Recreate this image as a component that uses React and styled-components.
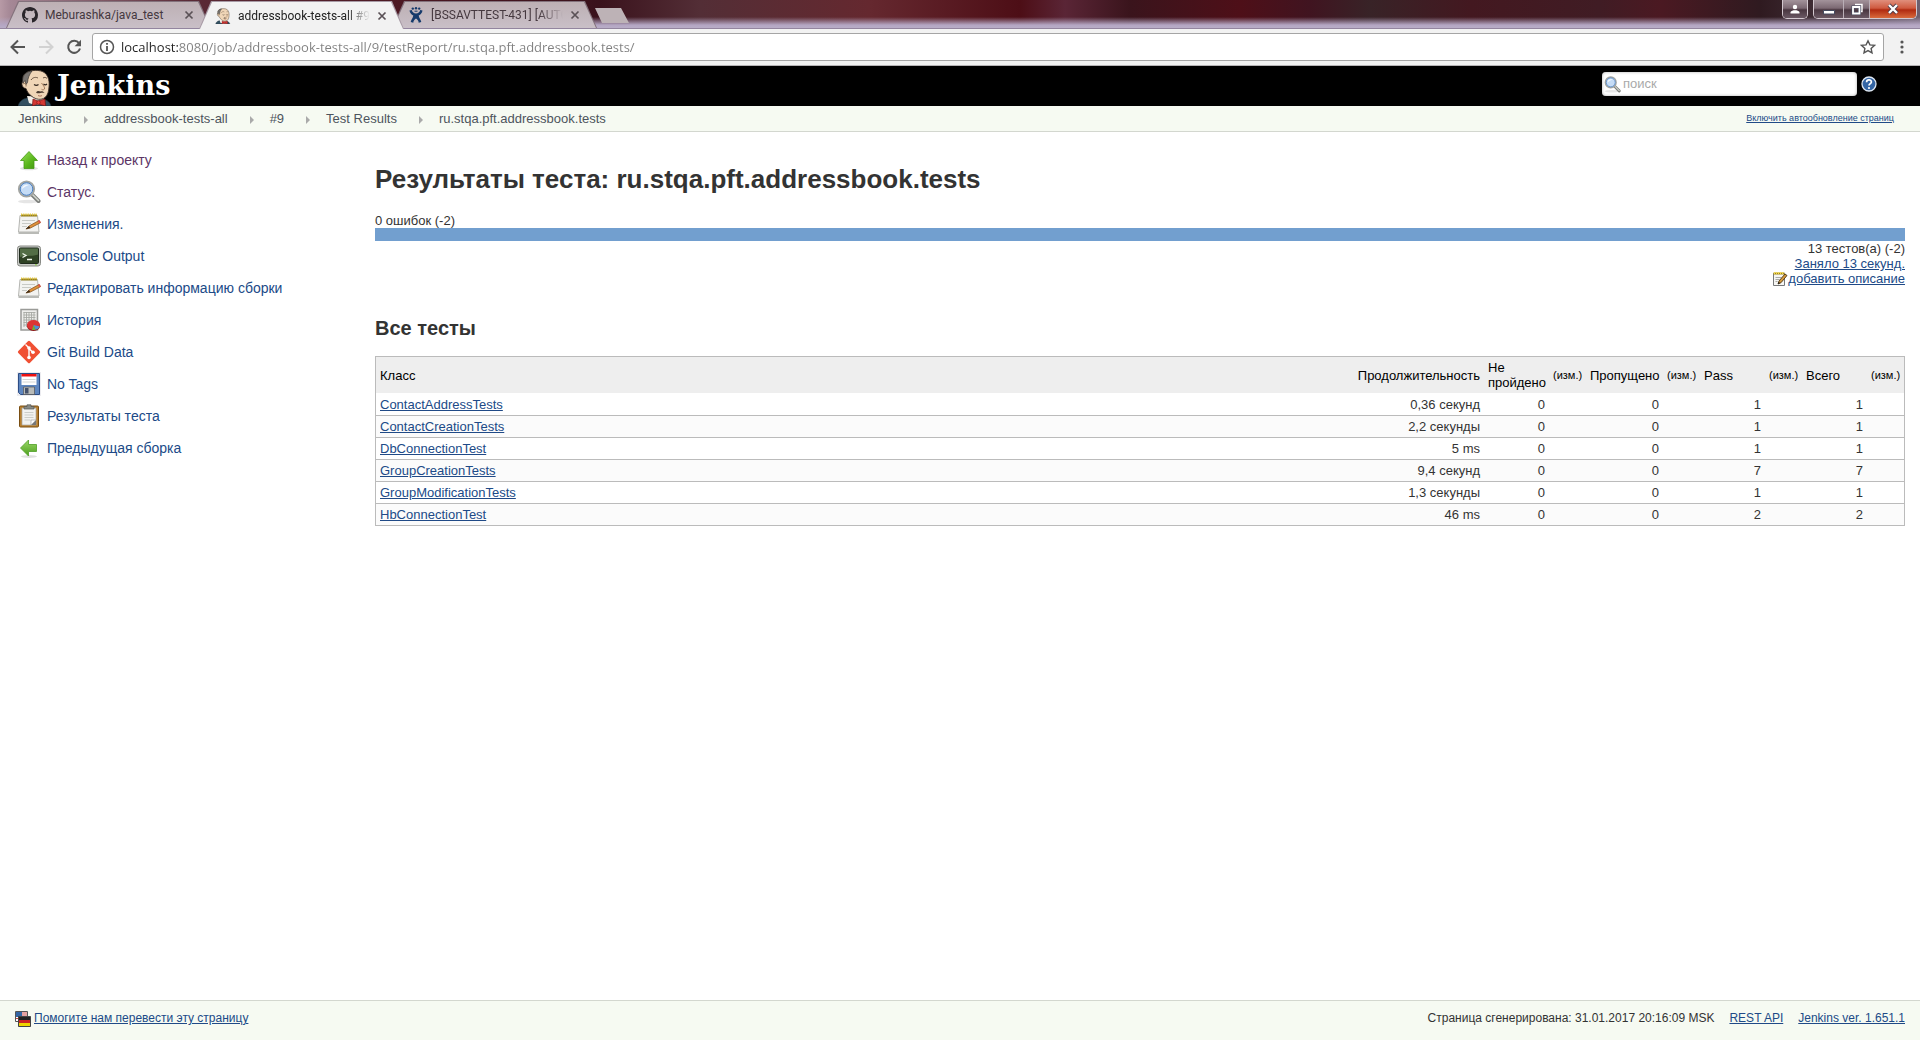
import React from "react";
import styled, { createGlobalStyle, css } from "styled-components";

const sans = '"Liberation Sans", Arial, sans-serif';
const chromeFont = '"Open Sans", "Noto Sans", sans-serif';
const tabFont = 'Roboto, "Noto Sans", sans-serif';
const linkColor = "#204a87";

const GlobalStyle = createGlobalStyle`
  *, *::before, *::after { box-sizing: border-box; }
  body { margin: 0; background: #fff; color: #333; font: 13px/15px ${sans}; }
  button, input { font-family: inherit; }
  button { padding: 0; border: 0; background: none; color: inherit; cursor: pointer; }
  svg { display: block; flex: none; }
  h1, h2, ul, ol, p { margin: 0; padding: 0; }
  ul, ol { list-style: none; }
`;

const Page = styled.div`
  display: flex;
  flex-direction: column;
  min-height: 100vh;
`;

/* ---------- browser frame ---------- */

const TitleBar = styled.div`
  display: flex;
  height: 29px;
  padding-left: 6px;
  border-bottom: 1px solid #93859f;
  background:
    linear-gradient(to bottom, rgba(180, 166, 195, 0) 17px, #b4a6c3 25px, #b9adc7 28px),
    linear-gradient(to right, #b79aa6 0, #a58896 10px, #5a2a36 190px, #4c1822 400px, #3a121c 600px,
      #532e36 700px, #65282f 870px, #4d0e16 1020px, #5a2536 1065px, #3a141c 1130px, #4e0f18 1240px,
      #401420 1310px, #382327 1370px, #431820 1470px, #401c24 1600px, #4b1922 1660px, #2f1a20 1760px,
      #4b3b44 1860px, #6d6070 100%);
`;

const TabList = styled.div`
  display: flex;
`;

const Tab = styled.div`
  position: relative;
  display: flex;
  align-items: center;
  gap: 7px;
  width: 205px;
  height: ${(p) => (p.$active ? 29 : 28)}px;
  margin-right: -12px;
  padding: 2px 17px 0 16px;
  z-index: ${(p) => (p.$active ? 2 : 1)};
  color: ${(p) => (p.$active ? "#222" : "#45383f")};

  &::before, &::after {
    content: "";
    position: absolute;
    z-index: -1;
    clip-path: polygon(0 100%, 12px 0, calc(100% - 12px) 0, 100% 100%);
  }
  &::before {
    inset: 1px 0 0 0;
    background: ${(p) => (p.$active ? "#a79aa5" : "#83727c")};
  }
  &::after {
    inset: 2px 1px 0 1px;
    background: ${(p) => (p.$active ? "#f2f2f2" : "linear-gradient(to bottom, #bdb0b4, #c9bfc7)")};
  }
`;

const TabTitle = styled.button`
  flex: 1;
  min-width: 0;
  overflow: hidden;
  text-align: left;
  white-space: nowrap;
  font: 12px/18px ${tabFont};
  mask-image: ${(p) => (p.$fade ? "linear-gradient(to right, #000 calc(100% - 24px), transparent)" : "none")};
`;

const NewTab = styled.button`
  width: 34px;
  height: 15px;
  margin: 8px 0 0 10px;
  background: #bdb2b6;
  clip-path: polygon(0 0, 26px 0, 100% 100%, 7px 100%);
`;

const WindowControls = styled.div`
  display: flex;
  align-items: flex-start;
  gap: 5px;
  margin-left: auto;
  padding-right: 3px;
`;

const ControlGroup = styled.div`
  display: flex;
  height: 19px;
  overflow: hidden;
  border: 1px solid #d3c8cf;
  border-top: 0;
  border-radius: 0 0 5px 5px;
`;

const ControlButton = styled.button`
  display: flex;
  align-items: center;
  justify-content: center;
  width: ${(p) => p.$width}px;
  border-right: 1px solid #b9aeb6;
  background: ${(p) =>
    p.$close
      ? "linear-gradient(to bottom, #e08f7c 0, #cf5a40 45%, #b02a10 55%, #d96a3c 100%)"
      : "linear-gradient(to bottom, #a3939b 0, #7c6973 45%, #493640 55%, #6b5964 100%)"};
  &:last-child { border-right: 0; }
`;

const Toolbar = styled.div`
  display: flex;
  align-items: center;
  height: 37px;
  padding: 0 9px;
  gap: 9px;
  background: #f2f2f2;
  border-bottom: 1px solid #b6b4b6;
`;

const NavButtons = styled.div`
  display: flex;
  gap: 10px;
`;

const IconButton = styled.button`
  display: grid;
  place-items: center;
  width: 18px;
  height: 18px;
`;

const Omnibox = styled.div`
  display: flex;
  flex: 1;
  align-items: center;
  height: 28px;
  padding: 0 6px;
  gap: 6px;
  border: 1px solid #a5a5a5;
  border-radius: 3px;
  background: #fff;
`;

const UrlInput = styled.input`
  flex: 1;
  min-width: 0;
  height: 22px;
  padding: 0;
  border: 0;
  outline: 0;
  font: 13px/22px ${chromeFont};
  color: transparent;
  background: linear-gradient(to right, #222 58px, #808080 58px);
  background-clip: text;
`;

/* ---------- page header ---------- */

const Header = styled.header`
  display: flex;
  align-items: center;
  justify-content: space-between;
  height: 40px;
  padding: 0 43px 0 18px;
  background: #000;
`;

const Brand = styled.a`
  display: flex;
  align-items: flex-end;
  height: 40px;
  gap: 5px;
  color: #fff;
  text-decoration: none;
`;

const BrandName = styled.span`
  font: bold 27px/40px "DejaVu Serif", Georgia, serif;
`;

const SearchForm = styled.form`
  display: flex;
  align-items: center;
  gap: 4px;
  margin-bottom: 4px;
`;

const SearchBox = styled.label`
  display: flex;
  align-items: center;
  width: 255px;
  height: 24px;
  padding-left: 2px;
  gap: 2px;
  border-radius: 4px;
  background: #fff;
  box-shadow: inset 0 0 3px #aaa;
`;

const SearchInput = styled.input`
  flex: 1;
  min-width: 0;
  padding: 0;
  border: 0;
  outline: 0;
  background: none;
  font: 13px/20px ${sans};
  &::placeholder { color: #a9a9a9; opacity: 1; }
`;

const BreadcrumbBar = styled.div`
  display: flex;
  align-items: center;
  justify-content: space-between;
  height: 26px;
  padding: 0 26px 0 18px;
  border-bottom: 1px solid #d3d7cf;
  background: #f6faf2;
`;

const Crumbs = styled.ol`
  display: flex;
`;

const Crumb = styled.li`
  display: flex;
  align-items: center;
  line-height: 25px;

  &:not(:last-child)::after {
    content: "";
    margin: 2px 16px 0 22px;
    border: 4px solid transparent;
    border-left: 4px solid #aaa;
    border-right: 0;
  }
`;

const CrumbLink = styled.a`
  color: #4d545d;
  text-decoration: none;
`;

const Link = styled.a`
  color: ${linkColor};
  text-decoration: underline;
  ${(p) => p.$small && css`font-size: 9px;`}
`;

/* ---------- body ---------- */

const Body = styled.div`
  display: flex;
  flex: 1;
`;

const Sidebar = styled.nav`
  flex: none;
  width: 360px;
  padding: 12px 0 0 17px;
`;

const Task = styled.li`
  display: flex;
  height: 32px;
`;

const TaskLink = styled.a`
  display: flex;
  align-items: center;
  gap: 6px;
  height: 32px;
  font-size: 14px;
  color: ${(p) => (p.$visited ? "#5c3566" : linkColor)};
  text-decoration: none;
`;

const Main = styled.main`
  flex: 1;
  min-width: 0;
  padding: 32px 15px 0;
`;

const Title = styled.h1`
  margin-bottom: 19px;
  font-size: 26px;
  line-height: 30px;
`;

const Subtitle = styled.h2`
  margin: 30px 0 16px;
  font-size: 20px;
  line-height: 24px;
`;

const ResultBar = styled.div`
  height: 13px;
  background: #729fcf;
`;

const Summary = styled.div`
  display: flex;
  flex-direction: column;
  align-items: flex-end;
`;

const SummaryLine = styled.div`
  display: flex;
  height: 15px;
`;

const ResultTable = styled.table`
  width: 100%;
  table-layout: fixed;
  border: 1px solid #bbb;
  border-collapse: separate;
  border-spacing: 0;
`;

const Col = styled.col`
  width: ${(p) => (p.$width ? p.$width + "px" : "auto")};
`;

const HeadCell = styled.th`
  padding: 3px 4px;
  border-bottom: 1px solid #fff;
  background: #eee;
  color: #000;
  font-weight: normal;
  font-size: ${(p) => (p.$small ? 11 : 13)}px;
  text-align: ${(p) => (p.$right ? "right" : "left")};
  vertical-align: middle;
`;

const Row = styled.tr`
  background: ${(p) => (p.$odd ? "#fbfbfb" : "#fff")};
  &:not(:first-child) td { border-top: 1px solid #bbb; }
`;

const Cell = styled.td`
  padding: 3px 4px;
  text-align: ${(p) => (p.$right ? "right" : "left")};
`;

const Footer = styled.footer`
  display: flex;
  align-items: center;
  justify-content: space-between;
  height: 40px;
  padding: 0 15px 4px;
  border-top: 1px solid #d3d7cf;
  background: #f6faf2;
  font-size: 12px;
`;

const FooterLinks = styled.div`
  display: flex;
  gap: 15px;
`;

const IconLink = styled(Link)`
  display: flex;
  align-items: center;
  gap: 3px;
`;

/* ---------- drawings ---------- */

const Butler = ({ width, height }) => (
  <svg width={width} height={height} viewBox="0 0 34 37" aria-hidden="true">
    <path d="M0 37c1-4 4-7 9-8l7 3 9-2c4 1 7 3 8 7z" fill="#335061" stroke="#1c2d38" strokeWidth=".6" />
    <path d="M9 27l2 7 6 2 8-1 1-7z" fill="#f5f1ea" />
    <path d="M8 4C12 1 22 0 27 4c4 4 4.500 9 4 14-.3 4-1 8-4 10.500-4 3-9 2-13-1-3-2-5-5-6-8-5-.5-5-7-2-8.500C4 9 5 6 8 4z" fill="#f0d6b7" stroke="#3a2f28" strokeWidth=".9" />
    <path d="M14 2c-5 .5-9 3-9.500 9l.5 3 2-2.500 1 4 1.500-2C10 9 11 6 14 2z" fill="#77736f" stroke="#2a2725" strokeWidth=".6" />
    <path d="M5 15c2-1.500 3.500 0 3 2.500" stroke="#8b6e53" fill="none" />
    <path d="M13 11c2-3 5-3 7-2M25 9c1.500-1 3-.7 4 .5" stroke="#5a4636" fill="none" strokeWidth=".9" />
    <path d="M16 15.500c1.300 1 3.300 1 4.500 0M25.500 15c1 1 2.500 1 3.500 0" stroke="#332820" strokeWidth="1.100" fill="none" />
    <path d="M23.500 14c2 2.500 3.500 4.500 3 6-.6 1-2 1-3 .3" stroke="#9a6f50" fill="none" strokeWidth=".9" />
    <path d="M18 23.500c1.500-2 3-1.500 4.500-1 1.500-.4 3 0 4 1.500-1.500-.6-2.800-.3-4 0-1.500.2-3 .8-4.500-.5z" fill="#4b3b30" />
    <path d="M20 26.500c1.500.8 3 .7 4 0" stroke="#9a5a48" strokeWidth=".8" fill="none" />
    <path d="M15 30l5 2 7-2 .6 7-7.600-2-5.600 2z" fill="#d33833" stroke="#731414" strokeWidth=".7" />
    <circle cx="20.500" cy="33.500" r="1.800" fill="#ef3d3a" stroke="#731414" strokeWidth=".6" />
  </svg>
);

const GitHubMark = () => (
  <svg width="16" height="16" viewBox="0 0 16 16" aria-hidden="true">
    <path fill="#29252a" d="M8 0C3.58 0 0 3.58 0 8c0 3.54 2.29 6.53 5.47 7.59.4.07.55-.17.55-.38 0-.19-.01-.82-.01-1.49-2.01.37-2.53-.49-2.69-.94-.09-.23-.48-.94-.82-1.13-.28-.15-.68-.52-.01-.53.63-.01 1.08.58 1.23.82.72 1.21 1.87.87 2.33.66.07-.52.28-.87.51-1.07-1.78-.2-3.64-.89-3.64-3.95 0-.87.31-1.59.82-2.15-.08-.2-.36-1.02.08-2.12 0 0 .67-.21 2.2.82a7.4 7.4 0 0 1 4 0c1.53-1.04 2.2-.82 2.2-.82.44 1.1.16 1.92.08 2.12.51.56.82 1.27.82 2.15 0 3.07-1.87 3.75-3.65 3.95.29.25.54.73.54 1.48 0 1.07-.01 1.93-.01 2.2 0 .21.15.46.55.38A8.01 8.01 0 0 0 16 8c0-4.42-3.58-8-8-8z" />
  </svg>
);

const JiraMark = () => (
  <svg width="16" height="16" viewBox="0 0 16 16" aria-hidden="true" fill="#153a6b">
    <circle cx="4.800" cy="1.600" r="1.200" /><circle cx="8" cy="1.200" r="1.200" /><circle cx="11.200" cy="1.600" r="1.200" />
    <path d="M1.500 3.500l2.300-.5C4.300 5.200 5.800 6.400 8 6.400S11.700 5.200 12.200 3l2.300.5c-.4 2.600-1.800 4-3.800 5C11 11 12.800 12.500 13.300 15l-2.600.8c-.1-2-1.300-3.300-2.700-4.200-1.400.9-2.600 2.200-2.700 4.200L2.700 15C3.200 12.500 5 11 5.300 8.500c-2-1-3.400-2.400-3.800-5z" />
    <path d="M6.500 4.200h3" stroke="#153a6b" />
  </svg>
);

const CloseMark = () => (
  <svg width="10" height="10" viewBox="0 0 10 10" aria-hidden="true">
    <path d="M1.500 1.500l7 7M8.500 1.500l-7 7" stroke="#5a5156" strokeWidth="1.700" />
  </svg>
);

const Arrow = ({ flip, color }) => (
  <svg width="16" height="16" viewBox="0 0 16 16" fill="none" stroke={color} strokeWidth="2" aria-hidden="true">
    <path d={flip ? "M1 8h13M8 1.500L14.500 8 8 14.500" : "M15 8H2M8 1.500L1.500 8 8 14.500"} />
  </svg>
);

const Reload = () => (
  <svg width="16" height="16" viewBox="0 0 16 16" aria-hidden="true">
    <path d="M13 4.200A6 6 0 1 0 14 9.500" fill="none" stroke="#555" strokeWidth="2" />
    <path d="M15 .8v6.400H8.600z" fill="#555" />
  </svg>
);

const Info = () => (
  <svg width="16" height="16" viewBox="0 0 16 16" aria-hidden="true">
    <circle cx="8" cy="8" r="6.500" fill="none" stroke="#555" strokeWidth="1.500" />
    <path d="M7.100 7h1.800v5H7.100zM7.100 4h1.800v1.800H7.100z" fill="#555" />
  </svg>
);

const Star = () => (
  <svg width="16" height="16" viewBox="0 0 16 16" aria-hidden="true">
    <path d="M8 1.800l1.900 4.100 4.500.5-3.300 3 .9 4.400L8 11.600l-4 2.200.9-4.400-3.300-3 4.500-.5z" fill="none" stroke="#555" strokeWidth="1.400" />
  </svg>
);

const Dots = () => (
  <svg width="4" height="14" viewBox="0 0 4 14" fill="#555" aria-hidden="true">
    <circle cx="2" cy="2" r="1.600" /><circle cx="2" cy="7" r="1.600" /><circle cx="2" cy="12" r="1.600" />
  </svg>
);

const Lens = ({ size = 24 }) => (
  <svg width={size} height={size} viewBox="0 0 24 24" aria-hidden="true">
    <ellipse cx="11" cy="21.500" rx="10" ry="1.800" fill="#000" opacity=".1" />
    <path d="M15 14.500l6.500 6.500" stroke="#7d7f7c" strokeWidth="4" strokeLinecap="round" />
    <path d="M15.500 14.500l6 6" stroke="#d3d7cf" strokeWidth="1.500" strokeLinecap="round" />
    <circle cx="9.500" cy="9" r="7.600" fill="#b4d0f0" stroke="#a3a5a1" strokeWidth="2" />
    <circle cx="9.500" cy="9" r="6.300" fill="#c5dcf6" stroke="#4b7fc0" strokeWidth="1" />
    <path d="M5 9c0-3 3-5 7-4-4 1-5 3-7 4z" fill="#fff" opacity=".8" />
  </svg>
);

const Up = () => (
  <svg width="24" height="24" viewBox="0 0 24 24" aria-hidden="true">
    <defs><linearGradient id="up" x2="1" y2="1"><stop stopColor="#9be25a" /><stop offset=".6" stopColor="#58b51b" /><stop offset="1" stopColor="#3f9310" /></linearGradient></defs>
    <ellipse cx="12" cy="20.500" rx="9" ry="1.800" fill="#000" opacity=".12" />
    <path d="M12 3.500l8.500 9H17v8H7v-8H3.500z" fill="url(#up)" stroke="#459a14" strokeWidth=".8" />
  </svg>
);

const Back = () => (
  <svg width="24" height="24" viewBox="0 0 24 24" aria-hidden="true">
    <defs><linearGradient id="back" x2="0" y2="1"><stop stopColor="#9bd868" /><stop offset="1" stopColor="#4c9f1d" /></linearGradient></defs>
    <ellipse cx="12" cy="20.500" rx="8" ry="1.500" fill="#000" opacity=".12" />
    <path d="M3.500 12l8-8v4.500H19.500v7h-8v4.500z" fill="url(#back)" stroke="#4f9e26" strokeWidth=".8" />
  </svg>
);

const Notepad = () => (
  <svg width="24" height="24" viewBox="0 0 24 24" aria-hidden="true">
    <path d="M3 3.500h17.500L22 20H1.500z" fill="#f3f3f1" stroke="#b4b5b1" />
    <path d="M1.500 20H22v2H1.500z" fill="#b9bab6" />
    <path d="M4 2.500h16v2H4z" fill="#8f7a1c" />
    <path d="M4 2.500h16" stroke="#e3c63d" strokeWidth="2" strokeDasharray="1.200 1" />
    <path d="M5 8.500h13M5 11.500h9M5 14.500h5" stroke="#c8cac6" />
    <path d="M9 17l3-3 10-5.500 1.500 2.200L13.500 16z" fill="#e0913a" stroke="#7d4c1a" strokeWidth=".7" />
    <path d="M8.500 17.300l3.500-3.300 1.300 2z" fill="#3b2a18" />
    <path d="M21 9l1.600-.9 1.300 2.300-1.600.9z" fill="#d9534f" />
  </svg>
);

const EditNote = () => (
  <svg width="16" height="16" viewBox="0 0 16 16" aria-hidden="true">
    <path d="M1.500 2.500h11v12h-11z" fill="#f6f6f4" stroke="#77787a" />
    <path d="M1.500 1.500h11v2h-11z" fill="#a88c12" />
    <path d="M2 2h10" stroke="#f3d94e" strokeWidth="2" strokeDasharray="1 1" />
    <path d="M3.500 6.500h6M3.500 8.500h4M3.500 10.500h2" stroke="#a9aba7" />
    <path d="M6 13l1-3 6-7 2 1.500-6 7.200z" fill="#d79a3c" stroke="#4a3413" strokeWidth=".9" />
    <path d="M6 13l.7-2 1.400 1.100z" fill="#111" />
  </svg>
);

const Terminal = () => (
  <svg width="24" height="24" viewBox="0 0 24 24" aria-hidden="true">
    <rect x=".5" y="2" width="23" height="20" rx="2.500" fill="#c8cac6" stroke="#888a85" />
    <rect x="2.500" y="4" width="19" height="15.500" rx="1" fill="#2f4225" stroke="#1f2a1c" />
    <path d="M3 4.500h18v6C13 13 8 11 3 13z" fill="#6c8a5e" opacity=".6" />
    <path d="M5.500 9.500l3.500 2-3.500 2M10 15.500h5" stroke="#f1f7ec" strokeWidth="1.300" fill="none" />
    <circle cx="19" cy="20.800" r=".7" fill="#73d216" />
  </svg>
);

const Report = () => (
  <svg width="24" height="24" viewBox="0 0 24 24" aria-hidden="true">
    <rect x="4" y="1.500" width="16.500" height="20.500" fill="#eeeeec" stroke="#9a9b98" strokeWidth="1.500" />
    <path d="M6.500 4.500h12M6.500 7h12M6.500 9.500h12M6.500 12h12M6.500 14.500h7M6.500 17h5M7 4v15M9.500 4v15M12 4v12M14.500 4v9M17 4v9" stroke="#a7a9a5" strokeWidth=".9" />
    <ellipse cx="16.500" cy="18" rx="6.500" ry="5" fill="#8f1313" />
    <ellipse cx="16.500" cy="17" rx="6.500" ry="5" fill="#dc3434" />
    <path d="M16.500 17l6.300 1.500a6.500 5 0 0 1-4.300 3.300z" fill="#4e8fd6" />
    <path d="M16.500 17l2 4.800a6.500 5 0 0 1-3.500.1z" fill="#6db33a" />
  </svg>
);

const Git = () => (
  <svg width="24" height="24" viewBox="0 0 24 24" aria-hidden="true">
    <rect x="3.700" y="3.700" width="16.600" height="16.600" rx="1.500" transform="rotate(45 12 12)" fill="#f05033" />
    <path d="M8.500 4.500l3.500 3.500v9M12 8.500l4 4" stroke="#fff" strokeWidth="1.400" fill="none" />
    <circle cx="12" cy="8" r="1.800" fill="#fff" /><circle cx="12" cy="17.500" r="1.800" fill="#fff" /><circle cx="16" cy="12.300" r="1.800" fill="#fff" />
  </svg>
);

const Floppy = () => (
  <svg width="24" height="24" viewBox="0 0 24 24" aria-hidden="true">
    <path d="M0 0h24v24H0z" fill="#ececf0" />
    <path d="M1.500 1.500h21v21h-19l-2-2z" fill="#5e86bf" stroke="#2c4d86" />
    <path d="M4.500 2h15v11h-15z" fill="#fff" /><path d="M4.500 2h15v2.500h-15z" fill="#e11" />
    <path d="M5.500 7.500h13M5.500 10h13" stroke="#d5d7d5" />
    <path d="M6.500 15h11v7.500h-11z" fill="#b9bbb8" stroke="#555" strokeWidth=".7" />
    <path d="M8 16h3.500v5.500H8z" fill="#44516b" />
  </svg>
);

const Clipboard = () => (
  <svg width="24" height="24" viewBox="0 0 24 24" aria-hidden="true">
    <rect x="2.500" y="2" width="19" height="21" rx="1" fill="#b9802f" stroke="#7a4e12" />
    <path d="M5 4h14v17H5z" fill="#f2f2f0" stroke="#a9aaa6" strokeWidth=".7" />
    <path d="M7.500 8.500h9M7.500 11h9M7.500 13.500h9M7.500 16h6" stroke="#cbcdc9" />
    <path d="M14 21l5-5v5z" fill="#777" /><path d="M14 21v-5h5z" fill="#fff" stroke="#999" strokeWidth=".6" />
    <path d="M7 5V2.500h3V.8h4v1.700h3V5z" fill="#888a85" stroke="#555753" strokeWidth=".7" />
  </svg>
);

const Help = () => (
  <svg width="16" height="16" viewBox="0 0 16 16" aria-hidden="true">
    <circle cx="8" cy="8" r="7" fill="#3465a4" stroke="#dfe8f3" strokeWidth="1.300" />
    <path d="M5.600 6.200C5.600 3.200 10.400 3.200 10.400 6c0 1.700-2.400 1.700-2.400 3.600" fill="none" stroke="#fff" strokeWidth="1.700" />
    <circle cx="8" cy="12" r="1.100" fill="#fff" />
  </svg>
);

const Flags = () => (
  <svg width="16" height="16" viewBox="0 0 16 16" aria-hidden="true">
    <path d="M.5.500h12v10H.5z" fill="#fff" stroke="#555" />
    <path d="M1 1h6v5H1z" fill="#3465a4" /><path d="M7 2h5M7 4h5M1 7.500h11" stroke="#cc4444" />
    <path d="M3.500 5.500h12v10h-12z" fill="#222" stroke="#444" />
    <path d="M4 9h11v3H4z" fill="#c22" /><path d="M4 12h11v3H4z" fill="#edd400" />
  </svg>
);

const UserGlyph = () => (
  <svg width="10" height="10" viewBox="0 0 10 10" fill="#fff" aria-hidden="true">
    <circle cx="5" cy="3" r="2.200" /><path d="M.5 9.500V8C2 5.500 8 5.500 9.500 8v1.500z" />
  </svg>
);
const MinimizeGlyph = () => (
  <svg width="12" height="12" viewBox="0 0 12 12" aria-hidden="true"><path d="M.5 7.500h11v3.500H.5z" fill="#fff" stroke="#444b60" /></svg>
);
const RestoreGlyph = () => (
  <svg width="12" height="12" viewBox="0 0 12 12" fill="none" aria-hidden="true">
    <path d="M4 1.500h7v7H9" stroke="#fff" strokeWidth="1.400" /><path d="M2 4h6.500v6.500H2z" stroke="#444b60" strokeWidth="3" /><path d="M2 4h6.500v6.500H2z" stroke="#fff" strokeWidth="1.800" />
  </svg>
);
const CloseGlyph = () => (
  <svg width="12" height="12" viewBox="0 0 12 12" aria-hidden="true">
    <path d="M2 2l8 8M10 2l-8 8" stroke="#4b3b48" strokeWidth="4" /><path d="M2 2l8 8M10 2l-8 8" stroke="#fff" strokeWidth="2.400" />
  </svg>
);

/* ---------- data ---------- */

const tabs = [
  { title: "Meburashka/java_test", icon: <GitHubMark /> },
  { title: "addressbook-tests-all #9", icon: <Butler width={16} height={16} />, active: true, fade: true },
  { title: "[BSSAVTTEST-431] [AUTO", icon: <JiraMark />, fade: true },
];

const crumbs = ["Jenkins", "addressbook-tests-all", "#9", "Test Results", "ru.stqa.pft.addressbook.tests"];

const tasks = [
  { label: "Назад к проекту", icon: <Up />, visited: true },
  { label: "Статус.", icon: <Lens />, visited: true },
  { label: "Изменения.", icon: <Notepad /> },
  { label: "Console Output", icon: <Terminal /> },
  { label: "Редактировать информацию сборки", icon: <Notepad /> },
  { label: "История", icon: <Report /> },
  { label: "Git Build Data", icon: <Git /> },
  { label: "No Tags", icon: <Floppy /> },
  { label: "Результаты теста", icon: <Clipboard /> },
  { label: "Предыдущая сборка", icon: <Back /> },
];

const columns = [
  { label: "Класс" },
  { label: "Продолжительность", width: 131, right: true },
  { label: "Не пройдено", width: 65 },
  { label: "(изм.)", width: 37, small: true },
  { label: "Пропущено", width: 77 },
  { label: "(изм.)", width: 37, small: true },
  { label: "Pass", width: 65 },
  { label: "(изм.)", width: 37, small: true },
  { label: "Всего", width: 65 },
  { label: "(изм.)", width: 37, small: true },
];

const results = [
  { name: "ContactAddressTests", time: "0,36 секунд", count: 1 },
  { name: "ContactCreationTests", time: "2,2 секунды", count: 1 },
  { name: "DbConnectionTest", time: "5 ms", count: 1 },
  { name: "GroupCreationTests", time: "9,4 секунд", count: 7 },
  { name: "GroupModificationTests", time: "1,3 секунды", count: 1 },
  { name: "HbConnectionTest", time: "46 ms", count: 2 },
];

function BrowserFrame() {
  return (
    <>
      <TitleBar>
        <TabList>
          {tabs.map((tab) => (
            <Tab key={tab.title} $active={tab.active}>
              {tab.icon}
              <TabTitle $fade={tab.fade}>{tab.title}</TabTitle>
              <button aria-label="Закрыть вкладку"><CloseMark /></button>
            </Tab>
          ))}
        </TabList>
        <NewTab aria-label="Новая вкладка" />
        <WindowControls>
          <ControlGroup>
            <ControlButton $width={24} aria-label="Пользователь"><UserGlyph /></ControlButton>
          </ControlGroup>
          <ControlGroup>
            <ControlButton $width={30} aria-label="Свернуть"><MinimizeGlyph /></ControlButton>
            <ControlButton $width={26} aria-label="Восстановить"><RestoreGlyph /></ControlButton>
            <ControlButton $width={46} $close aria-label="Закрыть"><CloseGlyph /></ControlButton>
          </ControlGroup>
        </WindowControls>
      </TitleBar>
      <Toolbar>
        <NavButtons>
          <IconButton aria-label="Назад"><Arrow color="#555" /></IconButton>
          <IconButton aria-label="Вперёд"><Arrow flip color="#d2d2d2" /></IconButton>
          <IconButton aria-label="Обновить"><Reload /></IconButton>
        </NavButtons>
        <Omnibox>
          <Info />
          <UrlInput
            aria-label="Адрес"
            defaultValue="localhost:8080/job/addressbook-tests-all/9/testReport/ru.stqa.pft.addressbook.tests/"
          />
          <IconButton aria-label="В закладки"><Star /></IconButton>
        </Omnibox>
        <IconButton aria-label="Меню"><Dots /></IconButton>
      </Toolbar>
    </>
  );
}

export default function App() {
  return (
    <Page>
      <GlobalStyle />
      <BrowserFrame />
      <Header>
        <Brand href="#">
          <Butler width={34} height={37} />
          <BrandName>Jenkins</BrandName>
        </Brand>
        <SearchForm onSubmit={(e) => e.preventDefault()}>
          <SearchBox>
            <Lens size={17} />
            <SearchInput type="text" placeholder="поиск" aria-label="поиск" />
          </SearchBox>
          <a href="#" aria-label="Справка"><Help /></a>
        </SearchForm>
      </Header>
      <BreadcrumbBar>
        <Crumbs>
          {crumbs.map((name) => (
            <Crumb key={name}><CrumbLink href="#">{name}</CrumbLink></Crumb>
          ))}
        </Crumbs>
        <Link href="#" $small>Включить автообновление страниц</Link>
      </BreadcrumbBar>
      <Body>
        <Sidebar>
          <ul>
            {tasks.map((task) => (
              <Task key={task.label}>
                <TaskLink href="#" $visited={task.visited}>{task.icon}{task.label}</TaskLink>
              </Task>
            ))}
          </ul>
        </Sidebar>
        <Main>
          <Title>Результаты теста: ru.stqa.pft.addressbook.tests</Title>
          <p>0 ошибок (-2)</p>
          <ResultBar />
          <Summary>
            <SummaryLine>13 тестов(а) (-2)</SummaryLine>
            <SummaryLine><Link href="#">Заняло 13 секунд.</Link></SummaryLine>
            <SummaryLine><EditNote /><Link href="#">добавить описание</Link></SummaryLine>
          </Summary>
          <Subtitle>Все тесты</Subtitle>
          <ResultTable>
            <colgroup>
              {columns.map((c, i) => <Col key={i} $width={c.width} />)}
            </colgroup>
            <thead>
              <tr>
                {columns.map((c, i) => (
                  <HeadCell key={i} scope="col" $small={c.small} $right={c.right}>{c.label}</HeadCell>
                ))}
              </tr>
            </thead>
            <tbody>
              {results.map((r, i) => (
                <Row key={r.name} $odd={i % 2 === 1}>
                  <Cell><Link href="#">{r.name}</Link></Cell>
                  <Cell $right>{r.time}</Cell>
                  <Cell $right>0</Cell>
                  <Cell />
                  <Cell $right>0</Cell>
                  <Cell />
                  <Cell $right>{r.count}</Cell>
                  <Cell />
                  <Cell $right>{r.count}</Cell>
                  <Cell />
                </Row>
              ))}
            </tbody>
          </ResultTable>
        </Main>
      </Body>
      <Footer>
        <IconLink href="#"><Flags />Помогите нам перевести эту страницу</IconLink>
        <FooterLinks>
          <span>Страница сгенерирована: 31.01.2017 20:16:09 MSK</span>
          <Link href="#">REST API</Link>
          <Link href="#">Jenkins ver. 1.651.1</Link>
        </FooterLinks>
      </Footer>
    </Page>
  );
}
